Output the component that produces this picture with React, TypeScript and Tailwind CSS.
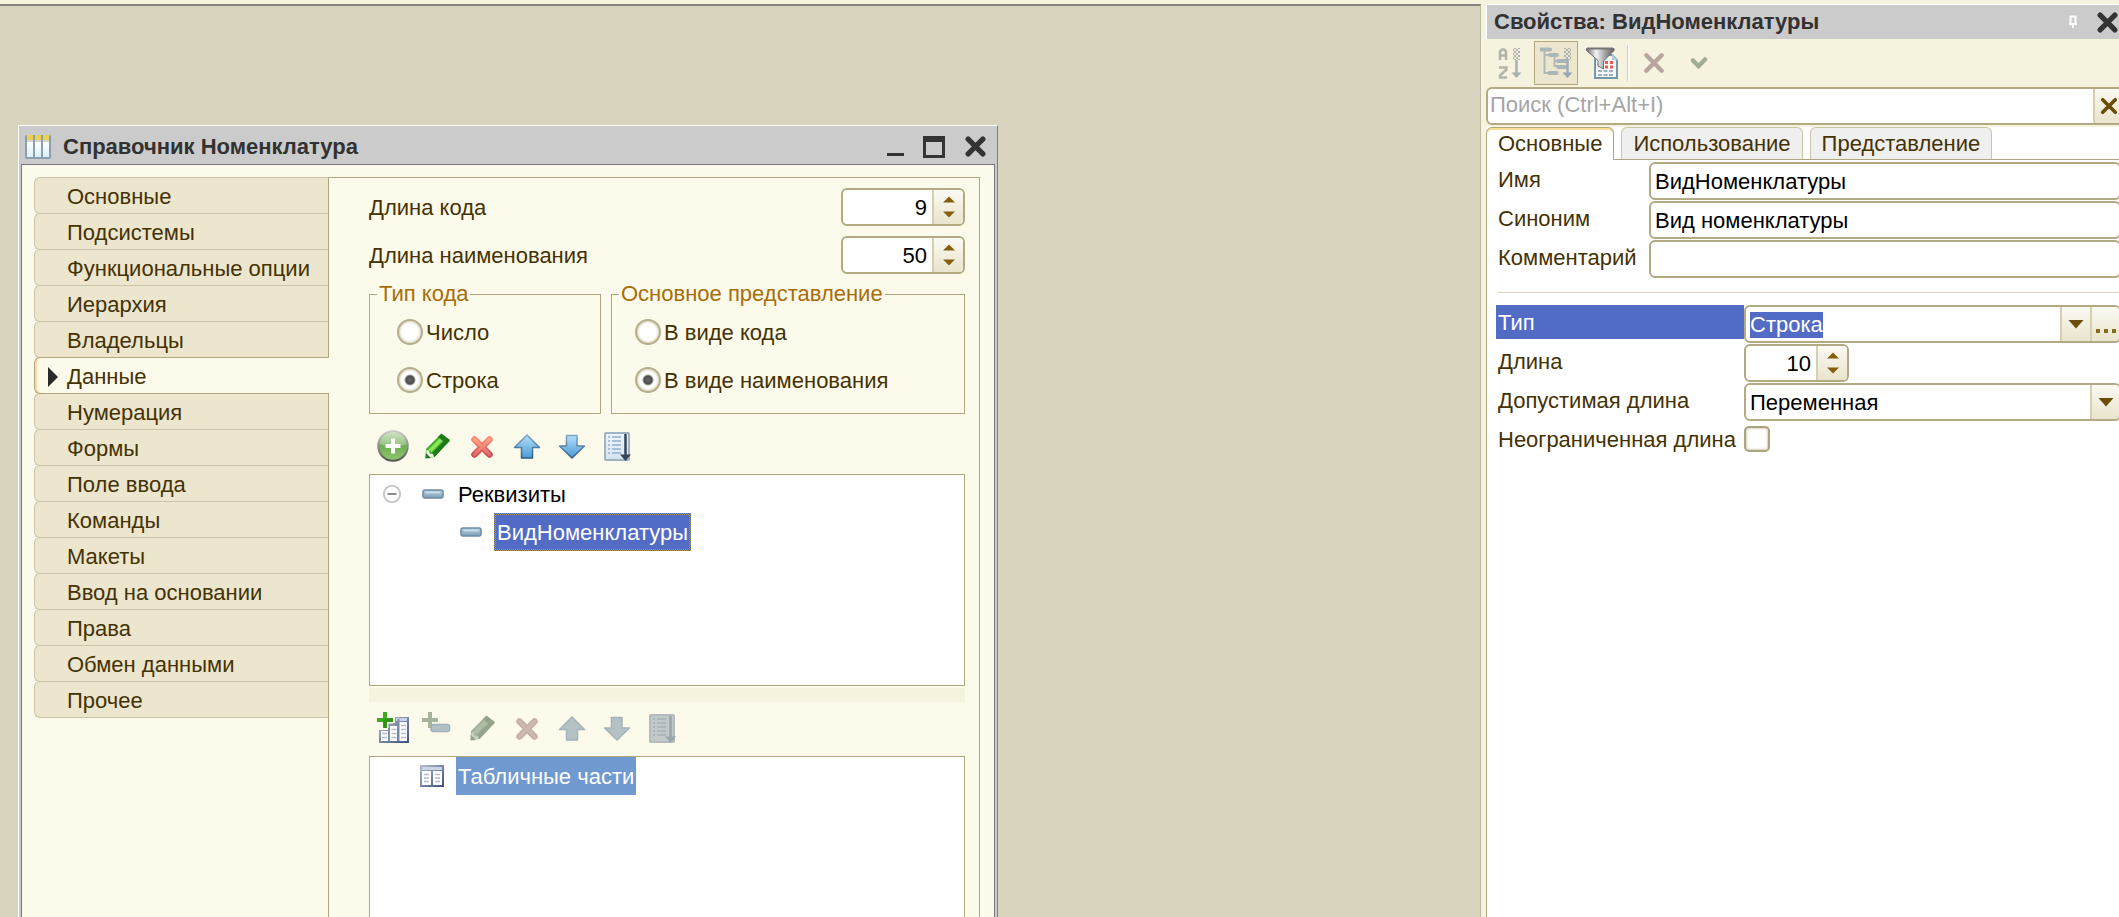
import { useEffect, useRef, useState } from "react";
import type { ReactNode } from "react";

const SECTIONS = [
  "Основные",
  "Подсистемы",
  "Функциональные опции",
  "Иерархия",
  "Владельцы",
  "Данные",
  "Нумерация",
  "Формы",
  "Поле ввода",
  "Команды",
  "Макеты",
  "Ввод на основании",
  "Права",
  "Обмен данными",
  "Прочее",
];

/* ---------- icons ---------- */

function Gradients() {
  return (
    <svg width="0" height="0" className="absolute" aria-hidden="true">
      <defs>
        <linearGradient id="g-green" x1="0" y1="0" x2="0" y2="1">
          <stop offset="0" stopColor="#c3dcb4" />
          <stop offset="0.5" stopColor="#6fae52" />
          <stop offset="1" stopColor="#8fc46f" />
        </linearGradient>
        <linearGradient id="g-ring" x1="0" y1="0" x2="0" y2="1">
          <stop offset="0" stopColor="#c9c9c6" />
          <stop offset="1" stopColor="#55594f" />
        </linearGradient>
        <linearGradient id="g-red" x1="0" y1="0" x2="0" y2="1">
          <stop offset="0" stopColor="#ff8a74" />
          <stop offset="1" stopColor="#cf4a4c" />
        </linearGradient>
        <linearGradient id="g-red-light" x1="0" y1="0" x2="0" y2="1">
          <stop offset="0" stopColor="#ffa28e" />
          <stop offset="1" stopColor="#e0716c" />
        </linearGradient>
        <linearGradient id="g-blue" x1="0" y1="0" x2="0" y2="1">
          <stop offset="0" stopColor="#b5e0fb" />
          <stop offset="1" stopColor="#4b9ad6" />
        </linearGradient>
        <linearGradient id="g-blue-line" x1="0" y1="0" x2="0" y2="1">
          <stop offset="0" stopColor="#7ba7c6" />
          <stop offset="1" stopColor="#2c5c83" />
        </linearGradient>
        <linearGradient id="g-pill" x1="0" y1="0" x2="0" y2="1">
          <stop offset="0" stopColor="#b9d3e4" />
          <stop offset="1" stopColor="#7d9db5" />
        </linearGradient>
        <linearGradient id="g-page" x1="0" y1="0" x2="0" y2="1">
          <stop offset="0" stopColor="#f0f5fa" />
          <stop offset="1" stopColor="#d5e3ef" />
        </linearGradient>
        <linearGradient id="g-table" x1="0" y1="0" x2="1" y2="1">
          <stop offset="0" stopColor="#b4bfd2" />
          <stop offset="1" stopColor="#3d5078" />
        </linearGradient>
        <linearGradient id="g-funnel" x1="0" y1="0" x2="1" y2="0">
          <stop offset="0" stopColor="#6c6c6c" />
          <stop offset="0.35" stopColor="#f4f4f4" />
          <stop offset="0.65" stopColor="#a9a9a9" />
          <stop offset="1" stopColor="#5e5e5e" />
        </linearGradient>
        <linearGradient id="g-col" x1="0" y1="0" x2="0" y2="1">
          <stop offset="0" stopColor="#ffffff" />
          <stop offset="1" stopColor="#dbeef9" />
        </linearGradient>
        <pattern id="p-check" width="4" height="4" patternUnits="userSpaceOnUse">
          <path d="M0 0h2v2H0zM2 2h2v2H2z" fill="#adb1ad" />
        </pattern>
      </defs>
    </svg>
  );
}

function CatalogIcon() {
  return (
    <svg width="28" height="26" viewBox="0 0 28 26" aria-hidden="true">
      <rect x="1" y="1" width="26" height="24" rx="2" fill="#8ba0ae" />
      {[3, 11, 19].map((x) => (
        <g key={x}>
          <rect x={x} y="1" width="6" height="6" fill="#ecd04e" />
          <rect x={x} y="6" width="6" height="2" fill="#cfd6cf" />
          <rect x={x} y="8" width="6" height="15" fill="url(#g-col)" />
        </g>
      ))}
    </svg>
  );
}

function AddIcon() {
  return (
    <svg width="32" height="32" viewBox="0 0 32 32" aria-hidden="true">
      <circle cx="16" cy="16" r="14.8" fill="url(#g-green)" stroke="url(#g-ring)" strokeWidth="2" />
      <path d="M3 14a13 12 0 0 1 26 0c-6 3-20 3-26 0z" fill="#fff" opacity="0.25" />
      <path d="M16 8.500v15M8.500 16h15" stroke="#fff" strokeWidth="4" />
    </svg>
  );
}

function PencilIcon({ muted }: { muted?: boolean }) {
  const dark = muted ? "#94a38c" : "#1f7a17";
  const mid = muted ? "#a3b19a" : "#3fb026";
  const light = muted ? "#b1bca8" : "#8be45a";
  return (
    <svg width="32" height="32" viewBox="1 0 32 32" aria-hidden="true">
      <path d="M4.500 28l.5-9L20 4l8.500 7L13.500 27z" fill={mid} />
      <path d="M7.500 19.500L20 7l3 2.500L10.500 22z" fill={light} />
      <path d="M13.500 27L28.500 11l-3-2.500L11 23z" fill={dark} />
      <path d="M17 7L20.500 3.500l8.500 6.500-3.500 4z" fill={dark} />
      <path d="M5 28l.6-8 2.500.5.4 3 3.500.5.8 3z" fill={muted ? "#c5ccba" : "#f1f6e2"} />
      <path d="M4.500 28.500l.4-5.500 5 5z" fill={dark} />
    </svg>
  );
}

function DeleteIcon({ muted }: { muted?: boolean }) {
  return (
    <svg width="32" height="32" viewBox="1 0 32 32" aria-hidden="true" fill="none" strokeLinecap="round">
      <path d="M8.500 9.500l15 15M23.500 9.500l-15 15" stroke={muted ? "#c6afa8" : "url(#g-red)"} strokeWidth="6.500" />
      <path d="M8.500 9.500l15 15M23.500 9.500l-15 15" stroke={muted ? "#cdb9b1" : "url(#g-red-light)"} strokeWidth="3" />
    </svg>
  );
}

function ArrowIcon({ down, muted }: { down?: boolean; muted?: boolean }) {
  return (
    <svg width="32" height="32" viewBox="1 0 32 32" aria-hidden="true">
      <path
        d={
          down
            ? "M10.500 5.500h10.500v10.500h7.500L16 28 3.500 16h7z"
            : "M16 5L28.500 17.500h-7v10.500H10.500v-10.500H3.500z"
        }
        fill={muted ? "#b5c1c4" : "url(#g-blue)"}
        stroke={muted ? "#a5b3b9" : "url(#g-blue-line)"}
        strokeWidth="1.500"
        strokeLinejoin="round"
      />
    </svg>
  );
}

function SortListIcon({ muted }: { muted?: boolean }) {
  return (
    <svg width="32" height="32" viewBox="0 0 32 32" aria-hidden="true">
      <rect x="3" y="3" width="24" height="27" rx="1" fill={muted ? "#c3c9c8" : "url(#g-page)"} stroke={muted ? "#b3bbbd" : "#9fb3c1"} strokeWidth="2" />
      {[7, 11, 15, 19, 23].map((y) => (
        <path key={y} d={`M6 ${y}h2M10 ${y}h9`} stroke={muted ? "#a3b3bb" : "#8fb0ca"} strokeWidth="1.600" />
      ))}
      <path d="M23.500 4v22" stroke={muted ? "#9aa5a9" : "#33455a"} strokeWidth="2.500" />
      <path d="M18 24.500h11L23.500 31z" fill={muted ? "#9aa5a9" : "#33455a"} />
    </svg>
  );
}

function PillIcon() {
  return (
    <svg width="22" height="12" viewBox="0 0 22 12" aria-hidden="true">
      <rect x="1" y="2" width="20" height="8" rx="2" fill="url(#g-pill)" stroke="#6b8ba3" strokeWidth="1.500" />
      <path d="M4 4.500h14" stroke="#cfe1ed" strokeWidth="1.500" />
    </svg>
  );
}

function CollapseIcon() {
  return (
    <svg width="20" height="20" viewBox="0 0 20 20" aria-hidden="true">
      <circle cx="10" cy="10" r="8.200" fill="#fff" stroke="#c2c2c2" strokeWidth="1.800" />
      <path d="M5.500 10h9" stroke="#8a8a8a" strokeWidth="2" />
    </svg>
  );
}

function TableIcon() {
  return (
    <svg width="26" height="24" viewBox="0 0 26 24" aria-hidden="true">
      <rect x="1" y="1" width="24" height="22" fill="url(#g-table)" />
      <rect x="3" y="3" width="20" height="3" fill="#cdd5e3" />
      <rect x="3" y="7" width="9" height="14" fill="#fff" />
      <rect x="14" y="7" width="9" height="14" fill="#fff" />
      <path d="M5 10.500h5M5 14h5M5 17.500h5M16 10.500h5M16 14h5M16 17.500h5" stroke="#b3bccd" strokeWidth="1.600" />
    </svg>
  );
}

function AddTableIcon() {
  return (
    <svg width="32" height="32" viewBox="0 0 32 32" aria-hidden="true">
      <path d="M18 5h14v26H2V18h10v-7h6z" fill="url(#g-table)" />
      <path d="M20 10h10v19h-8V10zM13 14h7v15h-7zM4 19h7v10H4z" fill="#fff" />
      <rect x="19" y="6" width="11" height="3" fill="#c9d3e4" />
      <path d="M12 12v17M21.500 7v22" stroke="#7d8cab" strokeWidth="2" />
      <path d="M5 21.500h5M5 25.500h5M14.500 17.500h5M14.500 21.500h5M14.500 25.500h5M24 13.500h5M24 17.500h5M24 21.500h5M24 25.500h5" stroke="#b1bccf" strokeWidth="1.600" />
      <path d="M8 0v16M0 8h16" stroke="#fcfaeb" strokeWidth="7" />
      <path d="M8 0v16M0 8h16" stroke="#3eaa1e" strokeWidth="4" />
      <path d="M8 8v8M8 8h8" stroke="#2f8f17" strokeWidth="3" />
    </svg>
  );
}

function AddItemIcon() {
  return (
    <svg width="32" height="32" viewBox="0 0 32 32" aria-hidden="true">
      <rect x="9" y="12.500" width="18.500" height="7" rx="2.500" fill="#b4c2c8" stroke="#9fb0b9" strokeWidth="1.500" />
      <path d="M8 0v16M0 8h16" stroke="#a5b39b" strokeWidth="4" />
    </svg>
  );
}

function SortAzIcon() {
  return (
    <svg width="32" height="32" viewBox="0 0 32 32" aria-hidden="true" fill="none">
      <path d="M6 13V4.500L8 2.500h2l2 2V13M6 8.500h6" stroke="#b3b4a9" strokeWidth="2.500" />
      <path d="M5 20.500h7.500v2L6 28.500v2h7" stroke="#b3b4a9" strokeWidth="2.500" />
      <rect x="19" y="1" width="7" height="12" fill="url(#p-check)" />
      <path d="M22.500 13v14" stroke="#a7b0b5" strokeWidth="2.500" />
      <path d="M17.500 25.500h10L22.500 31z" fill="#a7b0b5" />
    </svg>
  );
}

function SortTreeIcon() {
  return (
    <svg width="32" height="32" viewBox="0 0 32 32" aria-hidden="true" fill="none">
      <path d="M4.500 4v22h5M5 8h5M14.500 10v9h4M15 14h4" stroke="#b0bab8" strokeWidth="2" />
      <path d="M1 2.500h9M10 8h7M18 14h8M18 20h8M9.500 26h7" stroke="#aab6b8" strokeWidth="4" strokeLinecap="round" />
      <rect x="24" y="1" width="7" height="12" fill="url(#p-check)" />
      <path d="M27.500 12v15" stroke="#a1adb5" strokeWidth="2.500" />
      <path d="M22.500 25.500h10L27.500 31z" fill="#98a6b3" />
    </svg>
  );
}

function FunnelIcon() {
  return (
    <svg width="32" height="32" viewBox="0 0 32 32" aria-hidden="true">
      <path d="M9 8h17l5 5v18H9z" fill="#f4f8fb" stroke="#7896ab" strokeWidth="2" />
      <path d="M26 7v6h6z" fill="#b7cad8" />
      <path d="M19 15.500h3M24 15.500h3M19 20h3M24 20h3" stroke="#ee5a4c" strokeWidth="3" />
      <path d="M12 24h15M12 28h15" stroke="#9db1c0" strokeWidth="2" strokeDasharray="4 1.500" />
      <path d="M.5 1.500h27.500v2L17.500 14v8L12 19v-5.500L.5 3.500z" fill="url(#g-funnel)" stroke="#6e6e6e" strokeWidth="1" />
      <path d="M1 1.500h26" stroke="#757575" strokeWidth="2" />
    </svg>
  );
}

function CrossIcon({ color, size, width }: { color: string; size: number; width: number }) {
  return (
    <svg width={size} height={size} viewBox="0 0 20 20" aria-hidden="true">
      <path d="M3 3l14 14M17 3L3 17" stroke={color} strokeWidth={width} strokeLinecap="round" />
    </svg>
  );
}

function CheckIcon() {
  return (
    <svg width="18" height="14" viewBox="0 0 18 14" aria-hidden="true">
      <path d="M3 4.500l5.500 5.500L15 3.500" fill="none" stroke="#a1ad96" strokeWidth="4.500" strokeLinecap="round" />
    </svg>
  );
}

function PinIcon() {
  return (
    <svg width="12" height="16" viewBox="0 0 12 16" aria-hidden="true">
      <path d="M3.500 9.500V2.500h5V9.500M2 10h8M6 10v4" fill="none" stroke="#fff" strokeWidth="2" />
    </svg>
  );
}

function Triangle({ up }: { up?: boolean }) {
  return (
    <svg width="12" height="7" viewBox="0 0 12 7" aria-hidden="true">
      <path d={up ? "M6 0.500L12 6.500H0z" : "M6 6.500L12 .5H0z"} fill="#85600c" />
    </svg>
  );
}

function BigTriangle() {
  return (
    <svg width="16" height="10" viewBox="0 0 16 10" aria-hidden="true">
      <path d="M.5 1h15L8 9.500z" fill="#6b4d05" />
    </svg>
  );
}

/* ---------- controls ---------- */

const FIELD =
  "flex h-[38px] overflow-hidden rounded-[6px] border-2 border-[#b3a982] bg-white text-black";
const TEXT_INPUT = "min-w-0 flex-1 bg-transparent pt-[2px] pl-1 outline-none";
const SIDE_BUTTON =
  "flex shrink-0 items-center justify-center border-l-2 border-[#d6d0b0] bg-linear-to-b from-[#fbfaf3] to-[#e9e4cc]";

function NumberField({ id, value, className }: { id: string; value: number; className: string }) {
  const [current, setCurrent] = useState(value);
  return (
    <div className={`${FIELD} ${className}`}>
      <input
        id={id}
        type="number"
        value={current}
        onChange={(e) => setCurrent(Number(e.target.value))}
        className="w-0 min-w-0 flex-1 bg-transparent pt-[2px] pr-[5px] text-right [appearance:textfield] outline-none [&::-webkit-inner-spin-button]:appearance-none"
      />
      <div className={`${SIDE_BUTTON} w-[31px] flex-col gap-2`}>
        <button type="button" aria-label="Увеличить" onClick={() => setCurrent(current + 1)}>
          <Triangle up />
        </button>
        <button type="button" aria-label="Уменьшить" onClick={() => setCurrent(current - 1)}>
          <Triangle />
        </button>
      </div>
    </div>
  );
}

function Radio({
  name,
  label,
  defaultChecked,
}: {
  name: string;
  label: string;
  defaultChecked?: boolean;
}) {
  return (
    <label className="flex h-[26px] items-center gap-[3px]">
      <input
        type="radio"
        name={name}
        defaultChecked={defaultChecked}
        className="size-[26px] shrink-0 appearance-none rounded-full border-2 border-[#b5ad8b] bg-white shadow-[inset_0_0_2px_1px_#d8d3be] checked:bg-[radial-gradient(circle,#6b6b6b_0,#4c4c4c_4px,#fff_6px)]"
      />
      <span className="pt-[2px] whitespace-nowrap">{label}</span>
    </label>
  );
}

function ToolButton({ label, disabled, children }: { label: string; disabled?: boolean; children: ReactNode }) {
  return (
    <button type="button" aria-label={label} disabled={disabled} className="size-8 shrink-0">
      {children}
    </button>
  );
}

/* ---------- catalog window ---------- */

function CatalogWindow() {
  const [section, setSection] = useState("Данные");
  return (
    <section className="flex w-[980px] max-w-full flex-1 flex-col border-t border-r border-l border-t-white border-r-[#7d7f82] border-l-white bg-[#cbcbcb] px-[2px]">
      <header className="flex h-[38px] shrink-0 items-center pt-[3px] pr-[9px] pl-[3px]">
        <CatalogIcon />
        <h1 className="ml-[11px] flex-1 text-[22px] leading-[26px] font-bold text-[#323232]">
          Справочник Номенклатура
        </h1>
        <button type="button" aria-label="Свернуть" className="mr-[19px] flex h-[18px] w-[17px] items-end">
          <span className="h-[3px] w-full bg-[#333]" />
        </button>
        <button
          type="button"
          aria-label="Развернуть"
          className="mr-5 size-[22px] border-[3px] border-t-[6px] border-[#333]"
        />
        <button type="button" aria-label="Закрыть">
          <CrossIcon color="#333" size={21} width={5} />
        </button>
      </header>

      <div className="flex flex-1 border-t border-r border-l border-[#75777a] bg-[#fcfaeb] pt-3 pr-[14px] pl-3">
        <nav aria-label="Разделы" className="relative z-10 -mr-px flex w-[295px] shrink-0 flex-col">
          {SECTIONS.map((name) => {
            const active = name === section;
            return (
              <button
                key={name}
                type="button"
                onClick={() => setSection(name)}
                className={
                  active
                    ? "relative -mb-px flex h-[37px] items-center rounded-l-[6px] border-y border-l border-[#b1a77f] bg-[#fcfaeb] pt-[2px] text-left shadow-[inset_2px_0_0_#fbdc9a]"
                    : "-mb-px flex h-[37px] items-center rounded-l-[6px] border border-[#cbc5a8] border-r-[#b1a77f] bg-[#ece6ce] pt-[2px] text-left"
                }
              >
                <span className="flex w-8 shrink-0 justify-center pl-1">
                  {active && (
                    <svg width="12" height="22" viewBox="0 0 12 22" aria-hidden="true">
                      <path d="M1 1l10 10L1 21z" fill="#2a2a2a" />
                    </svg>
                  )}
                </span>
                <span className="whitespace-nowrap">{name}</span>
              </button>
            );
          })}
        </nav>

        <div className="flex min-w-0 flex-1 flex-col border-t border-r border-l border-[#b1a77f] pt-[10px] pr-[14px] pl-10">
          <div className="flex flex-col gap-[10px]">
            <div className="flex items-center justify-between">
              <label htmlFor="code-length" className="pt-[2px]">Длина кода</label>
              <NumberField id="code-length" value={9} className="w-[124px]" />
            </div>
            <div className="flex items-center justify-between">
              <label htmlFor="name-length" className="pt-[2px]">Длина наименования</label>
              <NumberField id="name-length" value={50} className="w-[124px]" />
            </div>
          </div>

          <div className="mt-[7px] flex gap-[10px]">
            <fieldset className="flex h-[133px] w-[232px] flex-col gap-[22px] border border-[#b1a77f] pt-3 pl-[27px]">
              <legend className="-ml-5 px-[2px] text-[#a86d07]">Тип кода</legend>
              <Radio name="code-type" label="Число" />
              <Radio name="code-type" label="Строка" defaultChecked />
            </fieldset>
            <fieldset className="flex h-[133px] flex-1 flex-col gap-[22px] border border-[#b1a77f] pt-3 pl-[23px]">
              <legend className="-ml-4 px-[2px] text-[#a86d07]">Основное представление</legend>
              <Radio name="presentation" label="В виде кода" />
              <Radio name="presentation" label="В виде наименования" defaultChecked />
            </fieldset>
          </div>

          <div className="flex gap-[13px] pt-4 pb-3 pl-2">
            <ToolButton label="Добавить"><AddIcon /></ToolButton>
            <ToolButton label="Изменить"><PencilIcon /></ToolButton>
            <ToolButton label="Удалить"><DeleteIcon /></ToolButton>
            <ToolButton label="Переместить вверх"><ArrowIcon /></ToolButton>
            <ToolButton label="Переместить вниз"><ArrowIcon down /></ToolButton>
            <ToolButton label="Упорядочить"><SortListIcon /></ToolButton>
          </div>

          <ul role="tree" className="h-[212px] border border-[#b1a77f] bg-white text-black">
            <li role="treeitem" aria-expanded="true">
              <div className="flex h-[38px] items-center pl-3">
                <button type="button" aria-label="Свернуть ветвь"><CollapseIcon /></button>
                <span className="ml-5"><PillIcon /></span>
                <span className="ml-[14px] pt-[2px]">Реквизиты</span>
              </div>
              <ul role="group">
                <li role="treeitem" aria-selected="true" className="flex h-[38px] items-center pl-[90px]">
                  <PillIcon />
                  <span className="ml-3 flex h-[38px] bg-[repeating-conic-gradient(#ad943b_0_25%,#526bc4_0_50%)] bg-size-[2px_2px] p-[2px]">
                    <span className="flex items-center bg-[#526bc4] px-px pt-[2px] text-white">ВидНоменклатуры</span>
                  </span>
                </li>
              </ul>
            </li>
          </ul>

          <div className="mt-[2px] h-[14px] bg-[#f5f2de]" />

          <div className="flex gap-[13px] pt-[10px] pb-3 pl-2">
            <ToolButton label="Добавить табличную часть"><AddTableIcon /></ToolButton>
            <ToolButton label="Добавить реквизит" disabled><AddItemIcon /></ToolButton>
            <ToolButton label="Изменить" disabled><PencilIcon muted /></ToolButton>
            <ToolButton label="Удалить" disabled><DeleteIcon muted /></ToolButton>
            <ToolButton label="Переместить вверх" disabled><ArrowIcon muted /></ToolButton>
            <ToolButton label="Переместить вниз" disabled><ArrowIcon down muted /></ToolButton>
            <ToolButton label="Упорядочить" disabled><SortListIcon muted /></ToolButton>
          </div>

          <ul role="tree" className="flex-1 border-x border-t border-[#b1a77f] bg-white">
            <li role="treeitem" aria-selected="true" className="flex h-[38px] items-center pl-[49px]">
              <TableIcon />
              <span className="ml-[11px] flex h-[38px] items-center bg-[#7099d0] px-[2px] pt-[2px] text-white">Табличные части</span>
            </li>
          </ul>
        </div>
      </div>
    </section>
  );
}

/* ---------- properties panel ---------- */

const TABS = ["Основные", "Использование", "Представление"];

function PropertiesPanel() {
  const [tab, setTab] = useState("Основные");
  const typeRef = useRef<HTMLInputElement>(null);

  useEffect(() => {
    typeRef.current?.focus({ preventScroll: true });
    typeRef.current?.select();
  }, []);

  return (
    <aside className="flex w-[633px] shrink-0 flex-col overflow-hidden bg-[#f5f2de] pt-1">
      <header className="flex h-[35px] shrink-0 items-center border-t border-l border-white bg-[#cbcbcb] pr-px pl-[7px]">
        <h2 className="flex-1 text-[22px] leading-[26px] font-bold text-[#323232]">Свойства: ВидНоменклатуры</h2>
        <button type="button" aria-label="Закрепить" className="mr-[18px]"><PinIcon /></button>
        <button type="button" aria-label="Закрыть"><CrossIcon color="#333" size={21} width={5} /></button>
      </header>

      <div className="flex h-12 shrink-0 items-center pl-2">
        <ToolButton label="По алфавиту"><SortAzIcon /></ToolButton>
        <button
          type="button"
          aria-label="По категориям"
          aria-pressed="true"
          className="ml-2 flex size-11 items-center justify-center border border-[#b1a77f] bg-[#ece6ce]"
        >
          <SortTreeIcon />
        </button>
        <span className="ml-2 flex"><ToolButton label="Отбор"><FunnelIcon /></ToolButton></span>
        <span className="ml-[9px] h-9 w-[2px] border-r border-l border-r-white border-l-[#d3cdae]" />
        <button type="button" aria-label="Отменить" className="ml-[14px]">
          <CrossIcon color="#b9a5a0" size={22} width={4} />
        </button>
        <button type="button" aria-label="Применить" className="ml-[25px]"><CheckIcon /></button>
      </div>

      <div className="flex h-[38px] shrink-0 overflow-hidden rounded-l-[6px] border-y-2 border-l-2 border-[#b3a982] bg-white">
        <input
          type="search"
          aria-label="Поиск"
          placeholder="Поиск (Ctrl+Alt+I)"
          className="min-w-0 flex-1 bg-transparent pb-[2px] pl-[2px] outline-none placeholder:text-[#a5a5a5]"
        />
        <button type="button" aria-label="Очистить" className={`${SIDE_BUTTON} w-[26px] pl-[3px]`}>
          <CrossIcon color="#6b4d05" size={18} width={4} />
        </button>
      </div>

      <div className="flex min-h-0 flex-1 flex-col border-l border-[#b1a77f] bg-white">
        <div role="tablist" className="-ml-px flex h-[35px] shrink-0 items-end bg-linear-to-b from-[#f5f2de] from-[2px] to-white to-[2px]">
          {TABS.map((name, i) => {
            const active = name === tab;
            return (
              <div key={name} className={i > 0 ? "flex border-b border-[#b1a77f] pl-[7px]" : "flex"}>
                <button
                  type="button"
                  role="tab"
                  aria-selected={active}
                  onClick={() => setTab(name)}
                  className={
                    active
                      ? "flex h-[33px] items-center rounded-t-[6px] border-x border-t border-[#b1a77f] bg-white px-[11px] shadow-[inset_0_2px_0_#fbdc9a]"
                      : "flex h-8 items-center rounded-t-[6px] border-x border-t border-[#cbc5a8] bg-[#efefef] px-[11px]"
                  }
                >
                  {name}
                </button>
              </div>
            );
          })}
          <div className="flex-1 border-b border-[#b1a77f]" />
        </div>

        <div className="-mr-[2px] flex flex-col gap-px pt-[2px] pl-[11px]">
          <div className="flex">
            <label htmlFor="prop-name" className="w-[151px] pt-[5px]">Имя</label>
            <div className={`${FIELD} flex-1`}>
              <input id="prop-name" defaultValue="ВидНоменклатуры" className={TEXT_INPUT} />
            </div>
          </div>
          <div className="flex">
            <label htmlFor="prop-synonym" className="w-[151px] pt-[5px]">Синоним</label>
            <div className={`${FIELD} flex-1`}>
              <input id="prop-synonym" defaultValue="Вид номенклатуры" className={TEXT_INPUT} />
            </div>
          </div>
          <div className="flex">
            <label htmlFor="prop-comment" className="w-[151px] pt-[5px]">Комментарий</label>
            <div className={`${FIELD} flex-1`}>
              <input id="prop-comment" className={TEXT_INPUT} />
            </div>
          </div>
        </div>

        <hr className="mt-[14px] ml-[11px] border-t border-[#d9d4bb]" />

        <div className="-mr-[2px] mt-3 flex flex-col gap-px pl-[9px]">
          <div className="flex">
            <label htmlFor="prop-type" className="h-[34px] w-[248px] bg-[#526bc4] pt-[5px] pl-[2px] text-white">Тип</label>
            <div className={`${FIELD} flex-1`}>
              <input
                id="prop-type"
                ref={typeRef}
                defaultValue="Строка"
                className={`${TEXT_INPUT} selection:bg-[#526bc4] selection:text-white`}
              />
              <button type="button" aria-label="Открыть список" className={`${SIDE_BUTTON} w-[30px]`}>
                <BigTriangle />
              </button>
              <button type="button" aria-label="Выбрать тип" className={`${SIDE_BUTTON} w-[29px]`}>
                <svg width="22" height="24" viewBox="0 0 22 24" aria-hidden="true">
                  <path d="M1 17h4v4H1zM9 17h4v4H9zM17 17h4v4h-4z" fill="#8a6a1f" />
                </svg>
              </button>
            </div>
          </div>
          <div className="flex">
            <label htmlFor="prop-length" className="w-[248px] pt-[5px] pl-[2px]">Длина</label>
            <NumberField id="prop-length" value={10} className="w-[105px]" />
          </div>
          <div className="flex">
            <label htmlFor="prop-allowed" className="w-[248px] pt-[5px] pl-[2px]">Допустимая длина</label>
            <div className={`${FIELD} flex-1`}>
              <select id="prop-allowed" className={`${TEXT_INPUT} appearance-none`}>
                <option>Переменная</option>
                <option>Фиксированная</option>
              </select>
              <span className={`${SIDE_BUTTON} pointer-events-none w-[29px]`}>
                <BigTriangle />
              </span>
            </div>
          </div>
          <div className="flex">
            <label htmlFor="prop-unlimited" className="w-[248px] pt-[5px] pl-[2px] whitespace-nowrap">Неограниченная длина</label>
            <input
              id="prop-unlimited"
              type="checkbox"
              className="mt-1 size-[26px] appearance-none rounded-[5px] border-2 border-[#aca37f] bg-white shadow-[inset_0_0_2px_1px_#d8d3be]"
            />
          </div>
        </div>
      </div>
    </aside>
  );
}

export default function App() {
  return (
    <div className="flex h-screen overflow-hidden bg-[#f5f2de] font-['Liberation_Sans',Arial,sans-serif] text-[22px] leading-[26px] text-[#443204]">
      <Gradients />
      <main className="mt-1 mr-[5px] flex min-w-0 flex-1 flex-col border-t-2 border-r border-t-[#84827a] border-r-[#bcb8a4] bg-[#d8d3bd] pt-[119px] pl-[18px]">
        <CatalogWindow />
      </main>
      <PropertiesPanel />
    </div>
  );
}
